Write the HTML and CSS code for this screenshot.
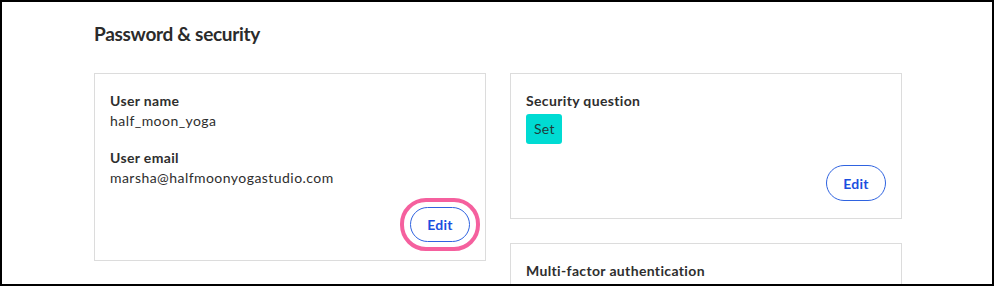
FILE: index.html
```html
<!DOCTYPE html>
<html lang="en">
<head>
<meta charset="utf-8">
<title>Password &amp; security</title>
<link rel="stylesheet" href="styles.css">
</head>
<body>
<div class="frame">
  <section class="section">
    <h2 class="section-title">Password &amp; security</h2>
    <div class="columns">
      <div class="column">
        <div class="card card-user">
          <div class="field">
            <div class="label">User name</div>
            <div class="value">half_moon_yoga</div>
          </div>
          <div class="field">
            <div class="label">User email</div>
            <div class="value">marsha@halfmoonyogastudio.com</div>
          </div>
          <div class="actions">
            <span class="highlight"><button class="btn-edit" type="button">Edit</button></span>
          </div>
        </div>
      </div>
      <div class="column">
        <div class="card card-question">
          <div class="field">
            <div class="label">Security question</div>
            <span class="badge">Set</span>
          </div>
          <div class="actions">
            <button class="btn-edit" type="button">Edit</button>
          </div>
        </div>
        <div class="card card-mfa">
          <div class="label">Multi-factor authentication</div>
        </div>
      </div>
    </div>
  </section>
</div>
</body>
</html>
```
FILE: styles.css
```css
* { box-sizing: border-box; }
html, body { margin: 0; padding: 0; background: #fff; }
body {
  font-family: Lato, "Noto Sans", "Liberation Sans", sans-serif;
  color: #2e2e2e;
  overflow: hidden;
}
.frame {
  width: 994px;
  height: 286px;
  border: 2px solid #000;
  overflow: hidden;
  padding: 20px 0 0 92px;
}
.section-title {
  margin: 0;
  font-size: 19px;
  font-weight: 700;
  line-height: 24px;
  letter-spacing: -0.3px;
  color: #2b2b2b;
}
.columns {
  display: flex;
  gap: 24px;
  margin-top: 27px;
  align-items: flex-start;
}
.column {
  display: flex;
  flex-direction: column;
  gap: 24px;
  width: 392px;
}
.card {
  border: 1px solid #dcdcdc;
  background: #fff;
  padding: 17px 15px 17px 15px;
  display: flex;
  flex-direction: column;
}
.field { display: flex; flex-direction: column; }
.field + .field { margin-top: 17px; }
.label {
  font-size: 14px;
  font-weight: 700;
  line-height: 20px;
  letter-spacing: 0.35px;
}
.value {
  font-size: 14px;
  line-height: 20px;
  letter-spacing: 0.45px;
}
.actions {
  display: flex;
  justify-content: flex-end;
  margin-top: 19px;
}
.card-question .actions { margin-top: 21px; }
.btn-edit {
  height: 35px;
  width: 60px;
  border: 1px solid #2f63e0;
  border-radius: 18px;
  background: #fff;
  color: #1a4fe0;
  font-family: inherit;
  font-size: 14px;
  font-weight: 700;
  letter-spacing: 0.3px;
  padding: 0;
  cursor: pointer;
}
.card-question .btn-edit { height: 36px; }
.highlight {
  display: inline-flex;
  margin: -9px -10px -8px -10px;
  padding: 5px 6px;
  border: 4px solid #f5609e;
  border-radius: 26px;
}
.badge {
  align-self: flex-start;
  margin-top: 3px;
  height: 30px;
  line-height: 30px;
  padding: 0 8px;
  width: 36px;
  text-align: center;
  background: #00dbd3;
  color: #1f3c3c;
  border-radius: 3px;
  font-size: 14px;
  letter-spacing: 0.3px;
}
.card-mfa { padding-bottom: 40px; }
```
